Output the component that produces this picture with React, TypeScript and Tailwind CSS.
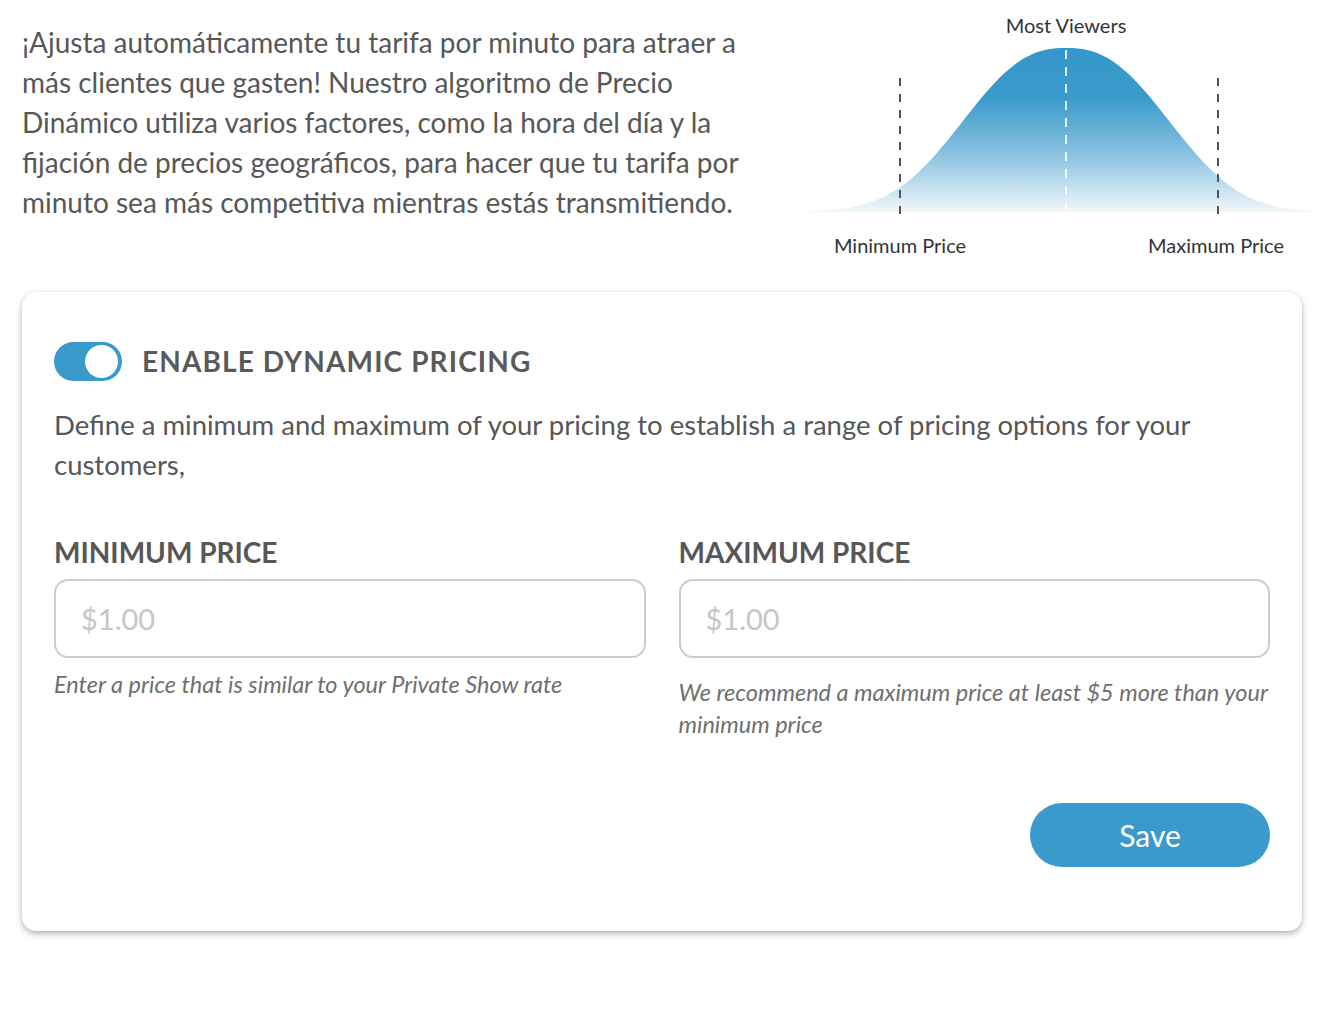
import React from 'react';

// bell-ish curve for the chart, baseline at y=212, peak at x=266
function bellPath() {
  const base = 212;
  const peak = 48;
  const mid = 266;
  const s = 128;
  const p = 2.45;
  const pts: string[] = [];
  for (let x = 8; x <= 516; x += 4) {
    const h = (base - peak) * Math.exp(-Math.pow(Math.abs(x - mid) / s, p));
    pts.push(`${x},${(base - h).toFixed(2)}`);
  }
  return `M8,${base} L${pts.join(' L')} L516,${base} Z`;
}

function Chart() {
  return (
    <svg width="524" height="270" viewBox="0 0 524 270" className="block">
      <defs>
        <linearGradient id="bell" x1="0" y1="48" x2="0" y2="214" gradientUnits="userSpaceOnUse">
          <stop offset="0" stopColor="#3597c9" />
          <stop offset="0.3" stopColor="#3a9acb" />
          <stop offset="0.65" stopColor="#8cc3e1" />
          <stop offset="1" stopColor="#f4f9fc" />
        </linearGradient>
      </defs>
      <text x="266" y="33" textAnchor="middle" fontSize="20" fill="#333" fontFamily="Lato, sans-serif">
        Most Viewers
      </text>
      <path d={bellPath()} fill="url(#bell)" />
      <line x1="100" y1="78" x2="100" y2="214" stroke="#555" strokeWidth="2" strokeDasharray="8 8" />
      <line x1="418" y1="78" x2="418" y2="214" stroke="#555" strokeWidth="2" strokeDasharray="8 8" />
      <line x1="266" y1="50" x2="266" y2="210" stroke="#fff" strokeOpacity="0.85" strokeWidth="2" strokeDasharray="9 8" />
      <text x="100" y="253" textAnchor="middle" fontSize="20" fill="#333" fontFamily="Lato, sans-serif">
        Minimum Price
      </text>
      <text x="416" y="253" textAnchor="middle" fontSize="20" fill="#333" fontFamily="Lato, sans-serif">
        Maximum Price
      </text>
    </svg>
  );
}

function PriceField({ label, hint, hintClass }: { label: string; hint: string; hintClass: string }) {
  return (
    <div className="flex flex-col">
      <label className="text-[28px] font-bold leading-[34px] text-[#575757]">{label}</label>
      <input
        placeholder="$1.00"
        className="mt-[10px] h-[79px] w-full rounded-[14px] border-2 border-[#c9cdd1] bg-white px-[25px] text-[29px] text-[#555] outline-none placeholder:text-[#c6c6c6]"
      />
      <p className={`${hintClass} text-[23.5px] italic leading-[32px] text-[#6f6f6f]`}>{hint}</p>
    </div>
  );
}

export default function App() {
  return (
    <div className="min-h-[1032px] w-[1324px] bg-white font-['Lato',sans-serif] text-[#555]">
      {/* intro + chart */}
      <div className="flex h-[292px] justify-between">
        <p className="ml-[22px] mt-[22px] w-[750px] text-[28px] leading-[40px] text-[#575757]">
          ¡Ajusta automáticamente tu tarifa por minuto para atraer a más clientes que gasten! Nuestro algoritmo de
          Precio Dinámico utiliza varios factores, como la hora del día y la fijación de precios geográficos, para
          hacer que tu tarifa por minuto sea más competitiva mientras estás transmitiendo.
        </p>
        <Chart />
      </div>

      {/* settings card */}
      <div className="mx-[22px] rounded-[14px] bg-white px-[32px] pb-[64px] pt-[48px] shadow-[0_3px_6px_rgba(0,0,0,0.28),0_0_3px_rgba(0,0,0,0.08)]">
        <div className="flex items-center gap-[20px]">
          <div className="flex h-[39px] w-[68px] items-center justify-end rounded-full bg-[#3a9acb] pr-[4px]">
            <div className="h-[33px] w-[33px] rounded-full bg-white" />
          </div>
          <h2 className="text-[28px] font-bold tracking-[0.04em] text-[#5a5a5a]">ENABLE DYNAMIC PRICING</h2>
        </div>

        <p className="mt-[23px] text-[27.5px] leading-[40px] text-[#575757]">
          Define a minimum and maximum of your pricing to establish a range of pricing options for your customers,
        </p>

        <div className="mt-[50px] grid grid-cols-2 gap-[33px]">
          <PriceField
            label="MINIMUM PRICE"
            hint="Enter a price that is similar to your Private Show rate"
            hintClass="mt-[10px]"
          />
          <PriceField
            label="MAXIMUM PRICE"
            hint="We recommend a maximum price at least $5 more than your minimum price"
            hintClass="mt-[18px]"
          />
        </div>

        <div className="mt-[63px] flex justify-end">
          <button className="h-[64px] w-[240px] rounded-full bg-[#3a9acb] text-[30px] text-white">Save</button>
        </div>
      </div>
    </div>
  );
}
